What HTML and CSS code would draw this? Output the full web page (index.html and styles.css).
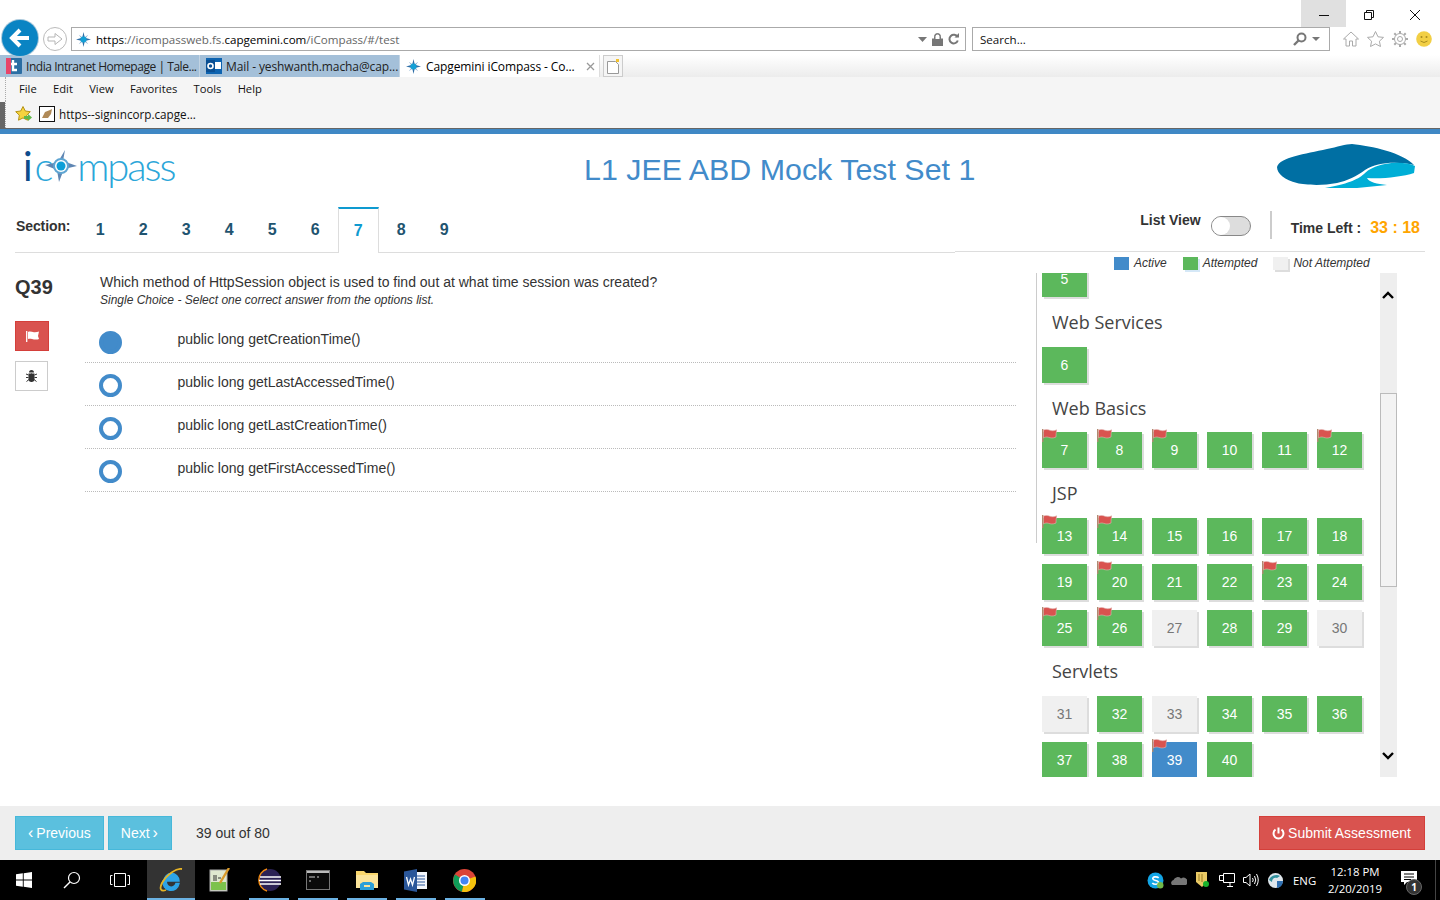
FILE: index.html
```html
<!DOCTYPE html>
<html lang="en">
<head>
<meta charset="utf-8">
<title>Capgemini iCompass</title>
<link rel="stylesheet" href="styles.css">
</head>
<body>
<svg class="defs" width="0" height="0" aria-hidden="true">
  <symbol id="star4" viewBox="0 0 16 16">
    <path d="M8 0 9.400 6.200 16 8 9.400 9.600 8 16 6.600 9.600 0 8 6.600 6.200Z" fill="#2f6fa8"/>
    <path d="M3 3 8 6.500 13 3 9.500 8 13 13 8 9.500 3 13 6.500 8Z" fill="#8fb4d4"/>
    <circle cx="8" cy="8" r="3.200" fill="#12a0d6"/>
  </symbol>
  <symbol id="flag" viewBox="0 0 15 13">
    <path d="M.7 0V13" stroke="#b08a70" stroke-width="1.400"/>
    <path d="M1.500 1C4 0 6 .5 8 1.300 10 2 12.500 1.800 14.800 .8 14.300 3 13.800 6 14 8 11 9.500 8.500 9 6.500 8.300 4.500 7.700 3 8 1.500 9Z" fill="#d9534f" stroke="#e3b5b2" stroke-width=".6"/>
  </symbol>
</svg>

<header class="browser">
  <div class="titlebar">
    <div class="winbtn winbtn-hover"><svg width="12" height="12" viewBox="0 0 12 12"><path d="M1 6.500H11" stroke="#111"/></svg></div>
    <div class="winbtn"><svg width="12" height="12" viewBox="0 0 12 12"><path d="M1.500 3.500H8.500V10.500H1.500ZM3.500 3.500V1.500H10.500V8.500H8.500" fill="none" stroke="#111"/></svg></div>
    <div class="winbtn"><svg width="12" height="12" viewBox="0 0 12 12"><path d="M1 1 11 11M11 1 1 11" stroke="#111"/></svg></div>
  </div>
  <div class="addressrow">
    <div class="nav-back"><svg width="24" height="24" viewBox="0 0 24 24"><path d="M21 12H5M12 4 4 12 12 20" fill="none" stroke="#fff" stroke-width="4"/></svg></div>
    <div class="nav-forward"><svg width="16" height="14" viewBox="0 0 16 14"><path d="M1 5H8V1.500L15 7 8 12.500V9H1Z" fill="none" stroke="#b5b5b5"/></svg></div>
    <div class="urlbar">
      <svg class="fav" width="15" height="15"><use href="#star4"/></svg>
      <span class="url"><b>https</b>://icompassweb.fs.<b>capgemini.com</b>/iCompass/#/test</span>
      <svg width="9" height="5" viewBox="0 0 9 5"><path d="M0 0H9L4.500 5Z" fill="#777"/></svg>
      <svg class="urlicon" width="11" height="13" viewBox="0 0 11 13"><path d="M0 6H11V13H0ZM2.500 6V3.500A3 3 0 0 1 8.500 3.500V6" fill="#777" stroke="#777"/><path d="M3.500 6V3.500A2 2 0 0 1 7.500 3.500V6" fill="#fff"/></svg>
      <svg class="urlicon" width="11" height="12" viewBox="0 0 11 12"><path d="M9.500 4A4.300 4.300 0 1 0 9.800 7.500" fill="none" stroke="#777" stroke-width="2"/><path d="M6.500 4.500H11V0Z" fill="#777"/></svg>
    </div>
    <div class="searchbar">
      <span class="search-text">Search...</span>
      <svg width="14" height="14" viewBox="0 0 14 14"><circle cx="8.500" cy="5.500" r="4" fill="none" stroke="#777" stroke-width="2"/><path d="M5.500 8.500 1 13" stroke="#777" stroke-width="2.400"/></svg>
      <svg class="urlicon" width="8" height="4" viewBox="0 0 8 4"><path d="M0 0H8L4 4Z" fill="#777"/></svg>
    </div>
    <div class="toolicons">
      <svg width="16" height="16" viewBox="0 0 16 16"><path d="M.5 8 8 1 15.500 8H13V15H9.500V10H6.500V15H3V8Z" fill="none" stroke="#aaa"/></svg>
      <svg width="17" height="16" viewBox="0 0 17 16"><path d="M8.500 .5 11 5.800 16.500 6.400 12.400 10.200 13.500 15.500 8.500 12.900 3.500 15.500 4.600 10.200 .5 6.400 6 5.800Z" fill="none" stroke="#aaa"/></svg>
      <svg width="16" height="16" viewBox="0 0 16 16"><circle cx="8" cy="8" r="2.500" fill="none" stroke="#aaa"/><circle cx="8" cy="8" r="5.500" fill="none" stroke="#aaa"/><path d="M8 0V2.500M8 13.500V16M0 8H2.500M13.500 8H16M2.300 2.300 4 4M12 12 13.700 13.700M13.700 2.300 12 4M4 12 2.300 13.700" stroke="#aaa" stroke-width="2"/></svg>
      <svg width="16" height="16" viewBox="0 0 16 16"><circle cx="8" cy="8" r="7.800" fill="#f2cf45"/><circle cx="5.500" cy="6" r="1" fill="#a88b20"/><circle cx="10.500" cy="6" r="1" fill="#a88b20"/><path d="M4.500 10Q8 13 11.500 10" fill="none" stroke="#a88b20"/></svg>
    </div>
  </div>
  <div class="tabrow">
    <div class="btab">
      <svg width="16" height="16" viewBox="0 0 16 16"><rect width="16" height="16" rx="1" fill="#2b6ea3"/><rect width="5" height="16" fill="#e8456a"/><path d="M7 2V12H11M5 6H11" fill="none" stroke="#fff" stroke-width="2.400"/></svg>
      <span class="btab-label btab-tight">India Intranet Homepage | Tale...</span>
    </div>
    <div class="btab">
      <svg width="16" height="16" viewBox="0 0 16 16"><rect width="16" height="16" fill="#0d63b0"/><rect x="9" y="4" width="6" height="7" fill="#fff"/><rect x="0" y="2" width="9" height="12" fill="#0a4f93"/><circle cx="4.500" cy="8" r="2.500" fill="none" stroke="#fff" stroke-width="1.600"/></svg>
      <span class="btab-label">Mail - yeshwanth.macha@cap...</span>
    </div>
    <div class="btab btab-active">
      <svg width="15" height="15"><use href="#star4"/></svg>
      <span class="btab-label">Capgemini iCompass - Co...</span>
      <svg class="tabclose" width="9" height="9" viewBox="0 0 9 9"><path d="M1 1 8 8M8 1 1 8" stroke="#999" stroke-width="1.300"/></svg>
    </div>
    <div class="newtab"><svg width="14" height="15" viewBox="0 0 14 15"><path d="M1.500 2.500H9.500L12.500 5.500V14.500H1.500Z" fill="#fff" stroke="#999"/><path d="M10 0H13V3H10Z" fill="#f2c230"/></svg></div>
  </div>
  <div class="menurow">
    <span>File</span><span>Edit</span><span>View</span><span>Favorites</span><span>Tools</span><span>Help</span>
  </div>
  <div class="favrow">
    <svg width="17" height="16" viewBox="0 0 17 16"><path d="M8 .5 10.300 5 15.300 5.700 11.700 9.200 12.500 14.200 8 11.900 3.500 14.200 4.300 9.200 .7 5.700 5.700 5Z" fill="#f5d33f" stroke="#b59318"/><path d="M9 10H13V8L17 11.500 13 15V13H9Z" fill="#5fb84a"/></svg>
    <svg class="favimg" width="16" height="16" viewBox="0 0 16 16"><rect x=".5" y=".5" width="15" height="15" fill="#fff" stroke="#111"/><path d="M3 12 6 6 11 4 13 3 12 8 9 12Z" fill="#b08a58"/></svg>
    <span>https--signincorp.capge...</span>
  </div>
</header>

<main class="page">
  <div class="page-head">
    <div class="logo">
      <span class="logo-i">i</span><span class="logo-c">c</span>
      <svg class="logo-star" width="32" height="32" viewBox="0 0 32 32">
        <path d="M20 0 18 11 32 16 19 19 14 32 12 20 0 15 13 12Z" fill="#5f86b3"/>
        <circle cx="16" cy="16" r="7" fill="#fff" stroke="#5fa5d2" stroke-width="2"/>
        <circle cx="16" cy="16" r="4.500" fill="#0d9fd8"/>
      </svg>
      <span class="logo-rest">mpass</span>
    </div>
    <h1 class="test-title">L1 JEE ABD Mock Test Set 1</h1>
    <svg class="brand" width="138" height="44" viewBox="0 0 138 44">
      <path d="M0 23C3 13 28 10 50 5 60 3 69 0 75 0 95 2 126 9 137 21 120 17 100 18 88 26 80 32 70 37 60 39 45 42 28 41 20 39 8 36 0 30 0 23Z" fill="#006fa3"/>
      <path d="M138 22C130 18 118 18 108 20 98 22 92 25 87 30 80 36 70 40 48 44H80L110 41C100 40 92 38 90 34 105 35 125 33 137 29Z" fill="#00aed6"/>
    </svg>
  </div>

  <div class="tabs-row">
    <nav class="sections">
      <span class="section-label">Section:</span>
      <a class="stab">1</a><a class="stab">2</a><a class="stab">3</a><a class="stab">4</a><a class="stab">5</a><a class="stab">6</a><a class="stab stab-active">7</a><a class="stab">8</a><a class="stab">9</a>
    </nav>
    <div class="status">
      <span class="listview-label">List View</span>
      <span class="toggle"><span class="knob"></span></span>
      <span class="status-divider"></span>
      <span class="time-label">Time Left :</span>
      <span class="time-value">33 : 18</span>
    </div>
  </div>

  <div class="body">
    <aside class="qside">
      <div class="qnum">Q39</div>
      <button class="flagbtn"><svg width="13" height="11" viewBox="0 0 13 11"><path d="M.7 0V11" stroke="#fff" stroke-width="1.300"/><path d="M2 1C4 0 6 1 8 1.300 10 1.500 11.500 1 13 .5L12 5 13 8C11 9 8 8.500 6 8 4.500 7.600 3 7.600 2 8Z" fill="#fff"/></svg></button>
      <button class="bugbtn"><svg width="11" height="12" viewBox="0 0 11 12"><path d="M3 2.500A2.500 2.500 0 0 1 8 2.500ZM2.500 3.500H8.500V9A3 3 0 0 1 2.500 9Z" fill="#333"/><path d="M0 4 2.500 5M11 4 8.500 5M0 7.500H2.500M11 7.500H8.500M.5 11.500 3 9.500M10.500 11.500 8 9.500M5.500 3.500V12" stroke="#333"/></svg></button>
    </aside>

    <section class="question">
      <p class="qtext">Which method of HttpSession object is used to find out at what time session was created?</p>
      <p class="qhint">Single Choice - Select one correct answer from the options list.</p>
      <ul class="options">
        <li class="option"><span class="radio radio-on"></span><span>public long getCreationTime()</span></li>
        <li class="option"><span class="radio"></span><span>public long getLastAccessedTime()</span></li>
        <li class="option"><span class="radio"></span><span>public long getLastCreationTime()</span></li>
        <li class="option"><span class="radio"></span><span>public long getFirstAccessedTime()</span></li>
      </ul>
    </section>

    <aside class="palette">
      <div class="legend">
        <span class="legend-item"><i class="swatch sw-active"></i>Active</span>
        <span class="legend-item"><i class="swatch sw-attempted"></i>Attempted</span>
        <span class="legend-item"><i class="swatch sw-none"></i>Not Attempted</span>
      </div>
      <div class="palette-main">
        <span class="palette-rule"></span>
        <div class="palette-scroll">
          <div class="palette-inner">
            <div class="tiles"><a class="tile tile-top">5</a></div>
            <h3 class="group">Web Services</h3>
            <div class="tiles"><a class="tile">6</a></div>
            <h3 class="group group-short">Web Basics</h3>
            <div class="tiles">
              <a class="tile">7<svg class="tileflag"><use href="#flag"/></svg></a>
              <a class="tile">8<svg class="tileflag"><use href="#flag"/></svg></a>
              <a class="tile">9<svg class="tileflag"><use href="#flag"/></svg></a>
              <a class="tile">10</a>
              <a class="tile">11</a>
              <a class="tile">12<svg class="tileflag"><use href="#flag"/></svg></a>
            </div>
            <h3 class="group">JSP</h3>
            <div class="tiles">
              <a class="tile">13<svg class="tileflag"><use href="#flag"/></svg></a>
              <a class="tile">14<svg class="tileflag"><use href="#flag"/></svg></a>
              <a class="tile">15</a><a class="tile">16</a><a class="tile">17</a><a class="tile">18</a>
              <a class="tile">19</a>
              <a class="tile">20<svg class="tileflag"><use href="#flag"/></svg></a>
              <a class="tile">21</a><a class="tile">22</a>
              <a class="tile">23<svg class="tileflag"><use href="#flag"/></svg></a>
              <a class="tile">24</a>
              <a class="tile">25<svg class="tileflag"><use href="#flag"/></svg></a>
              <a class="tile">26<svg class="tileflag"><use href="#flag"/></svg></a>
              <a class="tile tile-none">27</a>
              <a class="tile">28</a><a class="tile">29</a>
              <a class="tile tile-none">30</a>
            </div>
            <h3 class="group">Servlets</h3>
            <div class="tiles">
              <a class="tile tile-none">31</a>
              <a class="tile">32</a>
              <a class="tile tile-none">33</a>
              <a class="tile">34</a><a class="tile">35</a><a class="tile">36</a>
              <a class="tile">37</a><a class="tile">38</a>
              <a class="tile tile-current">39<svg class="tileflag"><use href="#flag"/></svg></a>
              <a class="tile">40</a>
            </div>
          </div>
        </div>
        <div class="scrollbar">
          <svg class="sb-arrow" width="12" height="8" viewBox="0 0 12 8"><path d="M1 7 6 2 11 7" fill="none" stroke="#000" stroke-width="2.400"/></svg>
          <span class="sb-thumb"></span>
          <svg class="sb-arrow" width="12" height="8" viewBox="0 0 12 8"><path d="M1 1 6 6 11 1" fill="none" stroke="#000" stroke-width="2.400"/></svg>
        </div>
      </div>
    </aside>
  </div>

  <footer class="page-foot">
    <a class="btn btn-info"><span class="chev">‹</span>Previous</a>
    <a class="btn btn-info btn-next">Next<span class="chev">›</span></a>
    <span class="progress">39 out of 80</span>
    <a class="btn btn-danger"><svg width="13" height="13" viewBox="0 0 13 13"><path d="M6.500 .5V6.500" stroke="#fff" stroke-width="2"/><path d="M3.500 2.500A5 5 0 1 0 9.500 2.500" fill="none" stroke="#fff" stroke-width="2"/></svg>Submit Assessment</a>
  </footer>
</main>

<footer class="taskbar">
  <div class="tb-cell"><svg width="16" height="16" viewBox="0 0 16 16"><path d="M0 2.300 6.800 1.300V7.600H0ZM7.700 1.200 16 0V7.600H7.700ZM0 8.400H6.800V14.700L0 13.700ZM7.700 8.400H16V16L7.700 14.800Z" fill="#fff"/></svg></div>
  <div class="tb-cell"><svg width="18" height="18" viewBox="0 0 18 18"><circle cx="11" cy="7" r="5.500" fill="none" stroke="#fff" stroke-width="1.200"/><path d="M7 11 1 17" stroke="#fff" stroke-width="1.400"/></svg></div>
  <div class="tb-cell"><svg width="20" height="14" viewBox="0 0 20 14"><path d="M4.500 .5H15.500V13.500H4.500ZM2.500 2.500H.5V11.500H2.500M17.500 2.500H19.500V11.500H17.500" fill="none" stroke="#fff"/></svg></div>
  <div class="tb-ie"><svg width="24" height="24" viewBox="0 0 24 24"><path d="M5 13A7.500 7.500 0 0 1 20 13H7.500A4.800 4.800 0 0 0 17 15.500H20A8 8 0 0 1 4 13Z" fill="#2ea4e6" stroke="#2ea4e6" stroke-width="1.500"/><path d="M23 1C18 0 8 6 3 15 0 21 2 24 7 22" fill="none" stroke="#e6b325" stroke-width="1.800"/></svg></div>
  <div class="tb-app"><svg width="22" height="24" viewBox="0 0 22 24"><rect x="1" y="2" width="17" height="21" fill="#dfe8d0" stroke="#aaa"/><rect x="2" y="14" width="15" height="8" fill="#7cc24d"/><path d="M5 7V13M7 7V13M9 10H12" stroke="#333"/><path d="M20 0 11 15" stroke="#d99a2b" stroke-width="2.400"/></svg></div>
  <div class="tb-app tb-run"><svg width="24" height="24" viewBox="0 0 24 24"><circle cx="13" cy="12" r="11" fill="#2c2255"/><path d="M10 1A11.500 11.500 0 0 0 10 23" fill="none" stroke="#f08a12" stroke-width="1.500"/><path d="M3 9H24M2 12.500H24M3 16H24" stroke="#fff" stroke-width="1.500"/></svg></div>
  <div class="tb-app tb-run"><svg width="24" height="20" viewBox="0 0 24 20"><rect x=".5" y=".5" width="23" height="19" fill="#0a0a0a" stroke="#777"/><rect x="1" y="1" width="22" height="2" fill="#bbb"/><path d="M3 7H9M11 7H13M3 11H5" stroke="#ccc"/></svg></div>
  <div class="tb-app tb-run"><svg width="22" height="20" viewBox="0 0 22 20"><path d="M0 1H8L10 3H22V18H0Z" fill="#f9d66c"/><rect x="0" y="5" width="22" height="13" fill="#fbe49a"/><path d="M4 18V14L7 12H15L18 14V18H14V15H8V18Z" fill="#2b9fd8"/><rect x="4" y="17" width="14" height="3" fill="#2b9fd8"/></svg></div>
  <div class="tb-app tb-run"><svg width="23" height="23" viewBox="0 0 23 23"><rect x="9" y="3" width="14" height="17" fill="#f3f6fb"/><path d="M11 7H21M11 10H21M11 13H21M11 16H21" stroke="#2b579a"/><path d="M0 2.500 13 0V23L0 20.500Z" fill="#2b579a"/><path d="M2.500 8 4.500 16 6.500 10 8.500 16 10.500 8" fill="none" stroke="#fff" stroke-width="1.300"/></svg></div>
  <div class="tb-app tb-run"><svg width="23" height="23" viewBox="0 0 23 23"><circle cx="11.500" cy="11.500" r="11.500" fill="#db4437"/><path d="M11.500 11.500 2 5.500A11.500 11.500 0 0 0 9 22.700Z" fill="#0f9d58"/><path d="M11.500 11.500 22.400 7.500A11.500 11.500 0 0 1 9 22.700Z" fill="#f4c20d"/><circle cx="11.500" cy="11.500" r="5.500" fill="#fff"/><circle cx="11.500" cy="11.500" r="4" fill="#4285f4"/></svg></div>

  <div class="tray">
    <span class="tray-slot"><svg width="17" height="17" viewBox="0 0 16 16"><circle cx="8" cy="8" r="7.500" fill="#12a5e6"/><path d="M11 5.500C9 3.800 5 4.500 5.500 6.500 6 8.500 11 7.500 10.800 10 10.300 12 6.500 12 5 10.300" fill="none" stroke="#fff" stroke-width="1.600"/><circle cx="12.500" cy="12.500" r="3" fill="#71b84a"/></svg></span>
    <span class="tray-slot"><svg width="16" height="10" viewBox="0 0 16 10"><path d="M1 10A3 3 0 0 1 2.500 5 4.500 4.500 0 0 1 10 3.500 3.500 3.500 0 0 1 15 10Z" fill="#777"/></svg></span>
    <span class="tray-slot"><svg width="14" height="16" viewBox="0 0 14 16"><path d="M0 0H11V10L6 15 0 10Z" fill="#e9c965"/><path d="M3 2V9M6 2V10" stroke="#9b7e25"/><circle cx="10" cy="12" r="3" fill="#19b32c"/></svg></span>
    <span class="tray-slot"><svg width="16" height="14" viewBox="0 0 16 14"><path d="M4.500 .5H15.500V9.500H4.500ZM.5 2.500H4.500M.5 2.500V7.500H4.500M8 13.500H14M11 9.500V13.500" fill="none" stroke="#fff"/></svg></span>
    <span class="tray-slot"><svg width="16" height="14" viewBox="0 0 16 14"><path d="M.5 4.500H3L7 1V13L3 9.500H.5ZM9.500 5Q11 7 9.500 9M11.500 3Q14 7 11.500 11M13.500 1Q17 7 13.500 13" fill="none" stroke="#fff"/></svg></span>
    <span class="tray-slot"><svg width="15" height="15" viewBox="0 0 15 15"><circle cx="7.500" cy="7.500" r="7.500" fill="#dfe6ec"/><path d="M1 7C3 2 9 1 12 3L9 5C6 4 4 6 4 9Z" fill="#2f8f9c"/><path d="M9 8H15A7.500 7.500 0 0 1 9 15Z" fill="#2f6fb0"/></svg></span>
    <span class="tray-lang">ENG</span>
    <div class="clock"><span>12:18 PM</span><span>2/20/2019</span></div>
    <div class="notif">
      <svg class="notif-ico" width="16" height="15" viewBox="0 0 16 15"><path d="M0 0H16V11H6L3 14V11H0Z" fill="#fff"/><path d="M3 3H13M3 6H13M3 8.500H10" stroke="#000"/></svg>
      <span class="notif-badge">1</span>
    </div>
    <span class="show-desktop"></span>
  </div>
</footer>
</body>
</html>
```

FILE: styles.css
```css
* { box-sizing: border-box; }
html, body { margin: 0; padding: 0; }
body {
  width: 1440px;
  height: 900px;
  overflow: hidden;
  display: flex;
  flex-direction: column;
  font-family: "Liberation Sans", Arial, sans-serif;
  color: #333;
  background: #fff;
}
.defs { position: absolute; }
svg { display: block; flex: none; }

/* browser chrome */
.browser {
  height: 134px;
  flex: none;
  position: relative;
  font-family: "Open Sans", "Noto Sans", sans-serif;
  font-size: 11.200px;
  color: #111;
  border-bottom: 6px solid #3f88c5;
  background: #f5f5f5;
}
.titlebar {
  height: 27px;
  display: flex;
  justify-content: flex-end;
  padding-right: 2px;
  background: #fff;
}
.winbtn {
  width: 46px;
  height: 29px;
  display: flex;
  align-items: center;
  justify-content: center;
}
.winbtn-hover { width: 45px; background: #e0e0e0; }
.addressrow {
  height: 28px;
  display: flex;
  align-items: flex-start;
  padding-left: 71px;
  background: #fff;
  position: relative;
}
.nav-back {
  position: absolute;
  left: 2px;
  top: -7px;
  width: 36px;
  height: 36px;
  border-radius: 50%;
  background: #0a84c3;
  box-shadow: 0 0 0 1px #a9c8db;
  display: flex;
  align-items: center;
  justify-content: center;
  z-index: 3;
}
.nav-forward {
  position: absolute;
  left: 43px;
  top: 0;
  width: 24px;
  height: 24px;
  border: 1px solid #bbb;
  border-radius: 50%;
  display: flex;
  align-items: center;
  justify-content: center;
}
.urlbar, .searchbar {
  height: 24px;
  border: 1px solid #aaa;
  display: flex;
  align-items: center;
  background: #fff;
  position: relative;
  z-index: 1;
}
.urlbar { width: 895px; padding: 0 6px 0 4px; }
.fav { margin-right: 5px; }
.url { flex: 1; font-size: 11.600px; color: #666; }
.url b { font-weight: 400; color: #000; }
.urlicon { margin-left: 5px; }
.searchbar { width: 358px; margin-left: 6px; padding: 0 9px 0 7px; }
.search-text { flex: 1; font-size: 11.600px; }
.toolicons {
  display: flex;
  align-items: center;
  gap: 8px;
  margin-left: 13px;
  height: 24px;
}
.tabrow {
  height: 22px;
  display: flex;
  align-items: flex-end;
  background: linear-gradient(#fff, #ececec);
}
.btab {
  height: 22px;
  width: 200px;
  display: flex;
  align-items: center;
  gap: 4px;
  padding-left: 6px;
  background: #a4c0d9;
  border-right: 1px solid #c3d4e3;
  white-space: nowrap;
  overflow: hidden;
}
.btab-active { width: 200px; background: #fff; border-right: 1px solid #ddd; gap: 5px; padding-left: 6px; }
.btab-label { font-size: 12px; color: #222; letter-spacing: -.1px; }
.btab-tight { letter-spacing: -.45px; }
.btab-active .btab-label { color: #000; }
.tabclose { margin-left: 6px; }
.newtab {
  width: 20px;
  height: 22px;
  margin-left: 3px;
  background: #f5f5f5;
  border: 1px solid #ccc;
  display: flex;
  align-items: center;
  justify-content: center;
}
.menurow {
  height: 24px;
  display: flex;
  align-items: center;
  gap: 16.300px;
  margin-left: 5px;
  padding: 0 0 2px 13px;
  border-left: 1px dotted #aaa;
}
.favrow {
  height: 27px;
  display: flex;
  align-items: center;
  margin-left: 5px;
  padding-left: 9px;
  font-size: 11.700px;
  border-left: 1px dotted #aaa;
  position: relative;
  box-shadow: 0 1px 0 #666, -5px 1px 0 #666;
  padding-bottom: 1px;
}
.favimg { margin: 0 4px 0 7px; }

/* page */
.page {
  height: 726px;
  flex: none;
  display: flex;
  flex-direction: column;
}
.page-head {
  height: 73px;
  flex: none;
  display: flex;
  align-items: flex-start;
  position: relative;
}
.logo {
  width: 220px;
  height: 48px;
  margin: 8px 0 0 23px;
  display: flex;
  align-items: center;
  font-family: "Lato", "Open Sans", sans-serif;
  font-weight: 300;
  font-size: 40px;
  letter-spacing: -2.100px;
  color: #2ba6d9;
  line-height: 48px;
}
.logo-i { color: #0e4c8c; font-weight: 400; }
.logo-c { margin-left: 4px; }
.logo-star { margin: 0 0 0 -6px; }
.logo-rest { margin-left: 0; }
.test-title {
  position: absolute;
  left: 584px;
  top: 17px;
  margin: 0;
  font-size: 30.400px;
  font-weight: 400;
  line-height: 36px;
  color: #428bca;
}
.brand { margin: 10px 25px 0 auto; }
.tabs-row {
  height: 46px;
  flex: none;
  display: flex;
  margin: 0 15px;
}
.sections {
  width: 940px;
  flex: none;
  display: flex;
  align-items: stretch;
  border-bottom: 1px solid #ddd;
}
.section-label {
  width: 63.600px;
  flex: none;
  padding: 11px 0 0 1px;
  font-size: 14px;
  font-weight: 700;
  line-height: 16px;
  letter-spacing: -.1px;
}
.stab {
  width: 43px;
  text-align: center;
  font-size: 16px;
  font-weight: 700;
  color: #1f5470;
  padding-top: 14px;
  line-height: 18px;
}
.stab-active {
  width: 41px;
  margin: 0 1px -1px;
  background: #fff;
  border: 1px solid #ddd;
  border-top: 2px solid #0e9ad0;
  border-bottom: 0;
  color: #0e9ad0;
  padding-top: 13px;
}
.status {
  flex: 1;
  height: 45px;
  display: flex;
  align-items: flex-start;
  justify-content: flex-end;
  border-bottom: 1px solid #ddd;
  padding-right: 5px;
  font-weight: 700;
  font-size: 14px;
}
.listview-label { margin-top: 5px; line-height: 16px; }
.toggle {
  width: 40px;
  height: 20px;
  margin: 9px 0 0 10px;
  border: 1px solid #888;
  border-radius: 10px;
  background: #ddd;
  display: block;
}
.knob {
  display: block;
  width: 18px;
  height: 18px;
  border-radius: 50%;
  background: #fff;
}
.status-divider {
  width: 2px;
  height: 28px;
  margin: 4px 19px 0 19px;
  background: #ccc;
}
.time-label { margin-top: 13px; line-height: 16px; }
.time-value {
  margin: 12px 0 0 9px;
  font-size: 16px;
  line-height: 18px;
  color: #ffa500;
}

.body {
  flex: 1;
  min-height: 0;
  display: flex;
}
.qside {
  width: 85px;
  flex: none;
  padding: 22px 0 0 15px;
  display: flex;
  flex-direction: column;
  align-items: flex-start;
}
.qnum { font-size: 20px; font-weight: 700; line-height: 24px; }
.flagbtn {
  width: 34px;
  height: 30px;
  margin-top: 22px;
  padding: 0;
  background: #d9534f;
  border: 1px solid #d43f3a;
  display: flex;
  align-items: center;
  justify-content: center;
}
.bugbtn {
  width: 33px;
  height: 30px;
  margin-top: 10px;
  padding: 0;
  background: #fff;
  border: 1px solid #ccc;
  display: flex;
  align-items: center;
  justify-content: center;
}
.question {
  width: 931px;
  flex: none;
}
.qtext {
  margin: 21px 0 0 15px;
  font-size: 14px;
  line-height: 16px;
}
.qhint {
  margin: 3px 0 0 15px;
  font-size: 12px;
  line-height: 14px;
  font-style: italic;
}
.options { list-style: none; margin: 10px 0 0; padding: 0; }
.option {
  height: 43px;
  display: flex;
  align-items: flex-start;
  border-bottom: 1px dotted #bbb;
  font-size: 14px;
  line-height: 16px;
  padding: 12px 0 0 14px;
}
.option > span:last-child { margin-left: 55.400px; margin-top: -1px; }
.option:first-child { height: 46px; padding-top: 15px; }
.radio {
  width: 23px;
  height: 23px;
  margin-top: -1px;
  border-radius: 50%;
  border: 4px solid #428bca;
  background: #fff;
  flex: none;
}
.radio-on { background: #428bca; }
.palette {
  margin-left: 20px;
  width: 361px;
  flex: none;
  display: flex;
  flex-direction: column;
  min-height: 0;
}
.legend {
  height: 20px;
  flex: none;
  display: flex;
  padding: 2px 0 0 78px;
  font-size: 12px;
  font-style: italic;
  line-height: 14px;
}
.legend-item { display: flex; align-items: center; height: 15px; margin-right: 16px; }
.swatch { width: 15px; height: 13px; margin: 1px 5px 0 0; display: block; }
.sw-active { background: #428bca; }
.sw-attempted { background: #5cb85c; box-shadow: 2px 2px 0 #d5e8f7; }
.sw-none { background: #f0f0f0; box-shadow: 2px 2px 0 #ddd; }
.palette-main {
  height: 504px;
  flex: none;
  display: flex;
}
.palette-rule {
  width: 1px;
  height: 270px;
  flex: none;
  background: #ccc;
  margin-right: 3px;
}
.palette-scroll {
  width: 340px;
  flex: none;
  height: 504px;
  overflow: hidden;
}
.palette-inner { margin-top: -12px; padding-left: 2px; }
.tiles {
  display: grid;
  grid-template-columns: repeat(6, 45px);
  column-gap: 10px;
  row-gap: 10px;
}
.tile {
  height: 36px;
  position: relative;
  display: flex;
  align-items: center;
  justify-content: center;
  background: #5cb85c;
  color: #fff;
  font-size: 14px;
  box-shadow: 2px 2px 0 #ddd;
}
.tile-none { background: #f0f0f0; color: #777; }
.tile-current { background: #428bca; box-shadow: none; }
.tileflag {
  position: absolute;
  left: 0;
  top: -3px;
  width: 15px;
  height: 13px;
}
.group {
  margin: 0;
  height: 50px;
  line-height: 50px;
  padding-left: 10px;
  font-family: "Open Sans", "Noto Sans", sans-serif;
  font-weight: 400;
  font-size: 18px;
  color: #444;
}
.group-short { height: 49px; }
.scrollbar {
  width: 17px;
  flex: none;
  height: 504px;
  background: #eee;
  position: relative;
  display: flex;
  flex-direction: column;
  justify-content: space-between;
  align-items: center;
  padding: 18px 1px 17px 0;
}
.sb-thumb {
  position: absolute;
  left: 0;
  top: 120px;
  width: 17px;
  height: 194px;
  background: #f3f3f3;
  border: 1px solid #bbb;
}
.page-foot {
  height: 54px;
  flex: none;
  margin-top: 29px;
  display: flex;
  align-items: center;
  padding: 0 15px;
  background: #eee;
}
.btn {
  height: 34px;
  padding: 0 12px;
  display: flex;
  align-items: center;
  gap: 3px;
  color: #fff;
  font-size: 14px;
  white-space: nowrap;
}
.btn-info { background: #5bc0de; border: 1px solid #46b8da; }
.btn-next { margin-left: 4px; padding-right: 13px; }
.chev { font-size: 16px; line-height: 16px; }
.progress { margin-left: 24px; font-size: 14px; flex: 1; }
.btn-danger { background: #d9534f; border: 1px solid #d43f3a; padding-right: 13px; }

/* taskbar */
.taskbar {
  height: 40px;
  flex: none;
  display: flex;
  align-items: stretch;
  background: #000;
  color: #fff;
  font-family: "Open Sans", "Noto Sans", sans-serif;
  font-size: 11.400px;
}
.tb-cell {
  width: 48px;
  display: flex;
  align-items: center;
  justify-content: center;
}
.tb-ie {
  width: 48px;
  margin-left: 3px;
  display: flex;
  align-items: center;
  justify-content: center;
  background: #333;
  box-shadow: inset 0 -2px #6bb2e3;
}
.tb-app {
  width: 49px;
  display: flex;
  align-items: center;
  justify-content: center;
  position: relative;
}
.tb-run::after {
  content: "";
  position: absolute;
  left: 5px;
  right: 4px;
  bottom: 0;
  height: 2px;
  background: #6bb2e3;
}
.tray {
  margin-left: auto;
  display: flex;
  align-items: center;
}
.tray-slot {
  width: 24px;
  display: flex;
  justify-content: center;
}
.tray-lang { margin: 0 4px 0 6px; width: 23px; }
.clock {
  width: 70px;
  display: flex;
  flex-direction: column;
  align-items: center;
  line-height: 17px;
}
.notif {
  width: 45px;
  height: 100%;
  position: relative;
  display: flex;
  align-items: center;
  justify-content: center;
  padding-right: 8px;
}
.notif-ico { margin-top: -4px; }
.notif-badge {
  position: absolute;
  left: 16px;
  top: 19px;
  width: 16px;
  height: 16px;
  border-radius: 50%;
  background: #333;
  border: 1px solid #666;
  font-size: 10px;
  font-weight: 700;
  line-height: 14px;
  text-align: center;
}
.show-desktop {
  width: 1px;
  height: 100%;
  background: #444;
  margin-right: 4px;
}
```
